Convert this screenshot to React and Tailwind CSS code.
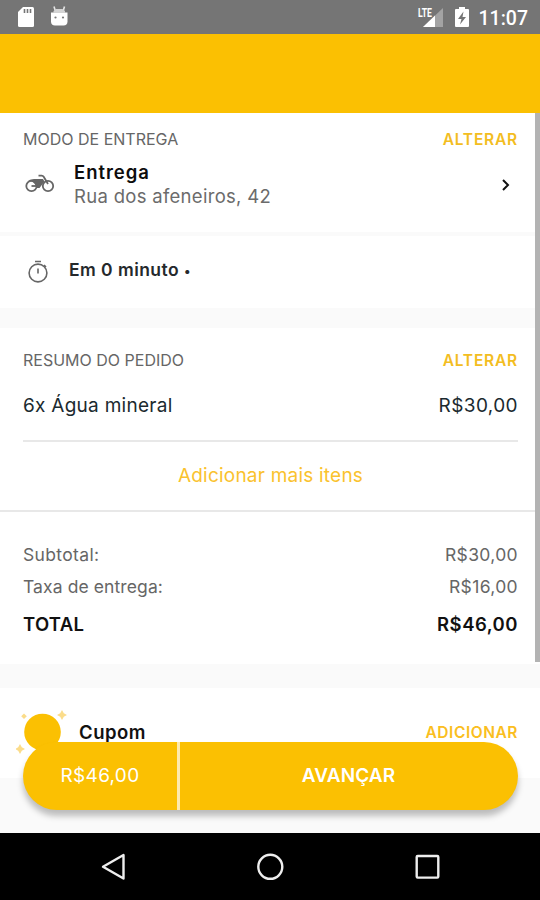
import clsx from 'clsx';

const totals = [
  { label: 'Subtotal:', value: 'R$30,00', labelClass: 'tracking-[0.35px]' },
  { label: 'Taxa de entrega:', value: 'R$16,00', labelClass: 'tracking-[0.1px]' },
];

function StatusBar() {
  return (
    <header className="flex h-[34px] items-center bg-[#757575] pl-[17px] pr-3">
      <svg width="18" height="22" viewBox="0 0 18 22">
        <path d="M6 1h9.500a1.500 1.500 0 0 1 1.500 1.500v17a1.500 1.500 0 0 1-1.500 1.500H2.500A1.500 1.500 0 0 1 1 19.500V6z" fill="#fff" />
        <path d="M7.500 3v4M10.500 3v4M13.500 3v4" stroke="#757575" strokeWidth="1.600" />
      </svg>
      <svg className="ml-[14px]" width="20" height="22" viewBox="0 0 20 22">
        <path d="M5 0.500l1.200 4M15.500 0.500l-1.200 4" stroke="#e4e4e4" strokeWidth="1.600" />
        <path d="M4.500 6.500V5L7 3h6.500L16 5v1.500z" fill="#d4d4d4" />
        <path d="M2 6.500h16.500v9c0 2.500-1.500 4-4 4H6c-2.500 0-4-1.500-4-4z" fill="#fff" />
        <circle cx="6.500" cy="11.500" r="1.100" fill="#777" />
        <circle cx="14" cy="11.500" r="1.100" fill="#777" />
      </svg>
      <div className="ml-auto flex items-center">
        <svg width="28" height="24" viewBox="0 0 28 24">
          <path d="M27 3v19H7z" fill="#a3a3a3" />
          <path d="M19 10.500V22H7z" fill="#fff" />
          <path d="M0 0h17v12H0z" fill="#757575" />
          <text x="2" y="11.500" fill="#fff" fontFamily="Roboto" fontWeight="700" fontSize="12.500" textLength="14" lengthAdjust="spacingAndGlyphs">LTE</text>
        </svg>
        <svg className="ml-[10px]" width="16" height="24" viewBox="0 0 16 24">
          <path d="M5 2h6v2h3q1 0 1 1v16q0 1-1 1H2q-1 0-1-1V5q0-1 1-1h3z" fill="#fff" />
          <path d="M9.500 6.500L4 14h3.500l-1.500 5.500 6-7.500H8.500z" fill="#757575" />
        </svg>
        <span className="ml-[9px] mt-[3px] font-[Roboto,sans-serif] text-[19.500px] font-medium leading-6 text-white">11:07</span>
      </div>
    </header>
  );
}

function SectionHeader({ title, action, className }) {
  return (
    <div className="flex h-5 items-center justify-between">
      <h2 className={clsx('text-[16px] leading-5 text-[#666]', className)}>{title}</h2>
      <button className="mt-[2px] text-[15.500px] font-semibold leading-5 tracking-[0.8px] text-[#f3bd21]">{action}</button>
    </div>
  );
}

function Motorcycle() {
  return (
    <svg width="30" height="20" viewBox="0 0 30 20" fill="none" stroke="#666" strokeWidth="1.800">
      <circle cx="6.500" cy="12" r="5.200" />
      <circle cx="23" cy="12" r="5.200" />
      <path d="M13.500 1.700h3.200q1.300 0 2 1.100L23 10" />
      <path d="M3 6.500Q6 5 9 5h9l1.500 2.500-5 6.500h-3.500C11 10 8.500 7.500 3 6.500z" fill="#666" stroke="none" />
      <path d="M6.500 12H13" />
    </svg>
  );
}

function Stopwatch() {
  return (
    <svg width="22" height="24" viewBox="0 0 22 24" fill="none" stroke="#666" strokeWidth="1.600">
      <circle cx="11" cy="13" r="8.900" />
      <path d="M8 1.500h6M11 8.500v5M17 5l2 2" />
    </svg>
  );
}

function Coupon() {
  return (
    <svg width="52" height="48" viewBox="0 0 52 48" fill="#fbc002">
      <circle cx="26.500" cy="23" r="18.300" />
      <path d="M46 1l1.800 3.200L51 6l-3.200 1.800L46 11l-1.800-3.200L41 6l3.200-1.800z" fill="#fbdc8a" />
      <path d="M4 35l1.800 3.200L9 40l-3.200 1.800L4 45l-1.800-3.200L-1 40l3.200-1.800z" fill="#fbdc8a" />
      <path d="M8 4.500L10.800 7.300 8 10.100 5.200 7.300z" fill="#fbdc8a" />
    </svg>
  );
}

function NavBar() {
  return (
    <nav className="grid h-[67px] grid-cols-[100px_28px_128px_28px_129px_28px] items-center bg-black">
      <svg className="col-start-2" width="28" height="30" viewBox="0 0 28 30" fill="none" stroke="#eee" strokeWidth="2.400">
        <path d="M23.500 3v23.500L3 14.800z" strokeLinejoin="round" />
      </svg>
      <svg className="col-start-4" width="28" height="30" viewBox="0 0 28 30" fill="none" stroke="#eee" strokeWidth="2.400">
        <circle cx="14.300" cy="14.800" r="12" />
      </svg>
      <svg className="col-start-6" width="28" height="30" viewBox="0 0 28 30" fill="none" stroke="#eee" strokeWidth="2.400">
        <rect x="3.700" y="4" width="21.600" height="21.600" rx="1" />
      </svg>
    </nav>
  );
}

export default function App() {
  return (
    <div className="relative flex h-[900px] w-[540px] flex-col overflow-hidden bg-[#fafafa] font-[Inter,sans-serif]">
      <StatusBar />
      <div className="h-[79px] shrink-0 bg-[#fbc002]" />

      <main className="h-[720px] overflow-hidden">
        <section className="h-[119px] bg-white pl-[23px] pr-[22px] pt-4">
          <SectionHeader title="MODO DE ENTREGA" action="ALTERAR" />
          <div className="mt-[11px] flex items-center pl-[2px]">
            <Motorcycle />
            <div className="ml-[19px] flex-1">
              <p className="text-[18.500px] font-semibold leading-6 tracking-[0.95px] text-[#0d0d0d]">Entrega</p>
              <p className="text-[18.500px] leading-6 tracking-[0.3px] text-[#6b6b6b]">Rua dos afeneiros, 42</p>
            </div>
            <svg className="mr-[7px] mt-px" width="10" height="14" viewBox="0 0 10 14" fill="none" stroke="#111" strokeWidth="2">
              <path d="M2 2l5 5-5 5" />
            </svg>
          </div>
        </section>

        <section className="mt-1 flex h-[72px] items-center bg-white pl-[27px]">
          <Stopwatch />
          <p className="-mt-[3px] ml-[20px] text-[17.500px] font-semibold leading-6 tracking-[0.45px] text-[#25292c]">
            Em 0 minuto <span className="text-[13px]">•</span>
          </p>
        </section>

        <section className="mt-5 h-[336px] bg-white pt-[22px]">
          <div className="pl-[23px] pr-[22px]">
            <SectionHeader title="RESUMO DO PEDIDO" action="ALTERAR" />
            <div className="mt-[23px] flex h-[26px] items-center justify-between text-[19px] text-[#1b2a2f]">
              <span className="tracking-[0.27px]">6x Água mineral</span>
              <span className="tracking-[0.4px]">R$30,00</span>
            </div>
            <div className="mt-[21px] h-[2px] bg-[#e8e8e8]" />
            <button className="block h-[68px] w-full text-center text-[19px] tracking-[0.22px] text-[#fac22e]">Adicionar mais itens</button>
          </div>
          <div className="h-[2px] bg-[#e8e8e8]" />
          <div className="pl-[23px] pr-[22px] pt-[27px]">
            {totals.map((row) => (
              <div key={row.label} className="flex h-8 items-center justify-between text-[17.500px] text-[#666]">
                <span className={row.labelClass}>{row.label}</span>
                <span className="tracking-[0.35px]">{row.value}</span>
              </div>
            ))}
            <div className="flex h-[44px] items-center justify-between text-[18.500px] font-semibold text-[#111]">
              <span className="tracking-[0.3px]">TOTAL</span>
              <span className="tracking-[0.5px]">R$46,00</span>
            </div>
          </div>
        </section>

        <section className="mt-6 flex h-[90px] items-center bg-white pl-4 pr-[22px]">
          <Coupon />
          <h3 className="-mt-[3px] ml-[11px] text-[18.500px] font-semibold leading-6 tracking-[0.5px] text-[#111]">Cupom</h3>
          <button className="ml-auto text-[15.500px] font-semibold leading-5 tracking-[0.55px] text-[#fabe20]">ADICIONAR</button>
        </section>
      </main>

      <NavBar />

      {/* Scroll indicator */}
      <div className="absolute right-0 top-[113px] h-[549px] w-[5px] bg-[#b3b3b3]" />

      {/* Floating checkout bar */}
      <div className="absolute bottom-[90px] left-[23px] flex h-[68px] w-[495px] rounded-full bg-[#fbc002] text-[19px] text-white shadow-[0_6px_6px_rgba(0,0,0,0.25)]">
        <span className="flex w-[157px] items-center justify-center border-r-[3px] border-[#fdeaaf] tracking-[0.3px]">R$46,00</span>
        <button className="flex-1 pr-px font-semibold tracking-[0.1px]">AVANÇAR</button>
      </div>
    </div>
  );
}
